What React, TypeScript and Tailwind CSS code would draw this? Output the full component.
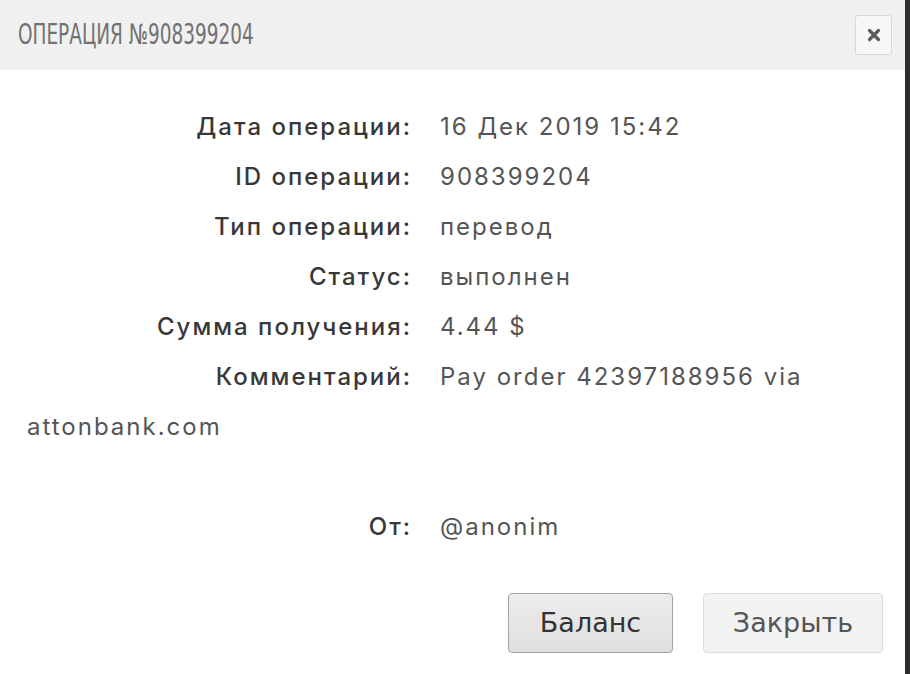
import React from "react";

const rows = [
  { label: "Дата операции:", value: ["16 Дек 2019 15:42"] },
  { label: "ID операции:", value: ["908399204"] },
  { label: "Тип операции:", value: ["перевод"] },
  { label: "Статус:", value: ["выполнен"] },
  { label: "Сумма получения:", value: ["4.44 $"] },
  { label: "Комментарий:", value: ["Pay order 42397188956 via", " attonbank.com"] },
];

const Row: React.FC<{ label: string; value: string[] }> = ({ label, value }) => (
  <div className="leading-[50px]">
    <span className="mr-[28px] inline-block w-[385px] text-right font-medium text-[#383838]">{label}</span>
    {value.map((v) => (
      <span key={v} className="text-[#555]">
        {v}
      </span>
    ))}
  </div>
);

const App: React.FC = () => {
  return (
    <div className="flex h-[674px] w-[910px] bg-[#2e2e2e]">
      <div className="flex w-[905px] flex-col bg-white">
        <div className="flex h-[70px] shrink-0 items-center justify-between bg-[#f0f0f0] pl-[18px] pr-[13px]">
          <h1
            className="origin-left scale-x-[0.66] whitespace-nowrap text-[28px] text-[#717171]"
            style={{ fontFamily: '"DejaVu Sans", sans-serif' }}
          >
            ОПЕРАЦИЯ №908399204
          </h1>
          <button className="flex h-[40px] w-[37px] items-center justify-center rounded-[3px] border border-[#d8d8d8] bg-[#f7f7f7]">
            <svg width="14" height="14" viewBox="0 0 14 14">
              <path d="M2.5 2.5 L11.5 11.5 M11.5 2.5 L2.5 11.5" stroke="#5a5a5a" strokeWidth="3.2" strokeLinecap="round" />
            </svg>
          </button>
        </div>

        <div
          className="flex flex-1 flex-col pl-[27px] pr-[22px] pt-[32px] text-[24px] tracking-[2px]"
          style={{ fontFamily: "Inter, \"Open Sans\", sans-serif" }}
        >
          {rows.map((r) => (
            <Row key={r.label} label={r.label} value={r.value} />
          ))}
          <div className="h-[50px]" />
          <Row label="От:" value={["@anonim"]} />

          <div
            className="mt-[41px] flex justify-end gap-[30px] tracking-normal"
            style={{ fontFamily: '"DejaVu Sans", sans-serif' }}
          >
            <button className="h-[60px] w-[165px] rounded-[4px] border border-[#a3a3a3] bg-gradient-to-b from-[#ececec] to-[#e0e0e0] text-[27px] text-[#333]">
              Баланс
            </button>
            <button className="h-[60px] w-[180px] rounded-[4px] border border-[#dcdcdc] bg-[#f2f2f2] text-[27px] text-[#555]">
              Закрыть
            </button>
          </div>
        </div>
      </div>
    </div>
  );
};

export default App;
